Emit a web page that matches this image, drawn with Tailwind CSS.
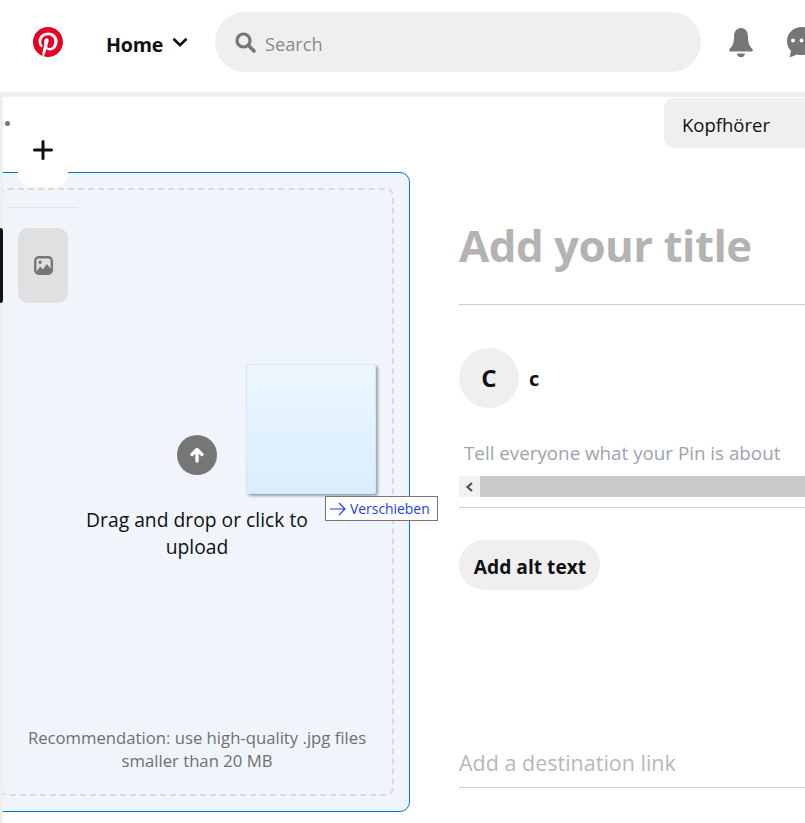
<!DOCTYPE html>
<html lang="en">
<head>
  <meta charset="UTF-8">
  <meta name="viewport" content="width=device-width, initial-scale=1.0">
  <title>Create Pin</title>
  <script src="https://cdn.jsdelivr.net/npm/@tailwindcss/browser@4"></script>
</head>
<body class="bg-white w-[805px] h-[823px] overflow-hidden font-['Open_Sans',sans-serif] text-[#111]">
  <!-- Top nav -->
  <header class="h-[92px] flex items-center bg-white pb-[8px]">
    <svg class="w-[30px] h-[30px] ml-[33px] shrink-0" viewBox="0 0 24 24" fill="#e60023"><path d="M0 12c0 5.123 3.211 9.497 7.730 11.218-.11-.937-.227-2.482.025-3.566.217-.932 1.401-5.938 1.401-5.938s-.357-.715-.357-1.774c0-1.660.962-2.900 2.161-2.900 1.020 0 1.512.765 1.512 1.682 0 1.025-.653 2.557-.99 3.978-.281 1.189.597 2.159 1.769 2.159 2.123 0 3.756-2.239 3.756-5.471 0-2.861-2.056-4.860-4.991-4.860-3.398 0-5.393 2.549-5.393 5.184 0 1.027.395 2.127.889 2.726a.36.36 0 0 1 .083.343c-.091.378-.293 1.189-.332 1.355-.053.218-.173.265-.4.159-1.492-.694-2.424-2.875-2.424-4.627 0-3.769 2.737-7.229 7.892-7.229 4.144 0 7.365 2.953 7.365 6.899 0 4.117-2.595 7.431-6.199 7.431-1.211 0-2.348-.63-2.738-1.373 0 0-.599 2.282-.744 2.840-.282 1.084-1.064 2.456-1.549 3.235C9.584 23.815 10.770 24 12 24c6.627 0 12-5.373 12-12S18.627 0 12 0 0 5.373 0 12"/></svg>
    <span class="ml-[43px] w-[57px] text-[19.6px] font-bold leading-none mt-[5px] tracking-[-0.2px]">Home</span>
    <svg class="w-[16px] h-[11px] ml-[9px] shrink-0" viewBox="0 0 16 11" fill="none" stroke="#111" stroke-width="2.600"><path d="M1.500 1.800 8 8.200l6.500-6.400"/></svg>
    <div class="ml-[27px] w-[486px] h-[60px] rounded-[30px] bg-[#efefef] flex items-center pl-[20px] shrink-0">
      <svg class="w-[21px] h-[21px] shrink-0" viewBox="0 0 21 21" fill="none" stroke="#767676"><circle cx="8.500" cy="8.500" r="6.500" stroke-width="3.200"/><path d="m13.500 13.500 5.500 5.500" stroke-width="3.600" stroke-linecap="round"/></svg>
      <span class="ml-[9px] mt-[6px] text-[18.2px] text-[#8a8a8a]">Search</span>
    </div>
    <svg class="w-[26px] h-[31px] ml-[27px] shrink-0" viewBox="0 0 26 31" fill="#767676"><path d="M13 1C8.500 1 6 4.500 6 10c0 6-1.500 9-4.300 12-.9 1-.6 2.500.7 2.500h21.200c1.300 0 1.600-1.500.7-2.500C21.500 19 20 16 20 10c0-5.500-2.500-9-7-9Z"/><path d="M9 26.500h8c0 2-1.800 3.800-4 3.800s-4-1.800-4-3.800Z"/></svg>
    <svg class="w-[30px] h-[31px] ml-[33px] shrink-0" viewBox="0 0 30 31"><path fill="#767676" d="M15 0C6.700 0 0 6 0 14c0 4 1.400 7.300 4 9.800L2.500 30.500l7.500-3c1.500.4 3.300.5 5 .5 8.300 0 15-6 15-14S23.300 0 15 0Z"/><circle cx="6" cy="13.500" r="1.900" fill="#fff"/><circle cx="14.500" cy="13.500" r="1.900" fill="#fff"/></svg>
  </header>
  <div class="h-[5px] bg-[#efefef]"></div>

  <main class="relative flex h-[726px] pl-[3px] overflow-hidden">
    <div class="absolute left-0 top-0 bottom-0 w-[3px] bg-[#efefef]"></div>

    <!-- Left column with upload card -->
    <section class="relative w-[407px] h-full shrink-0 overflow-hidden pt-[75px]">
      <div class="w-[426px] -ml-[19px] h-[640px] rounded-[10px] border border-[#0074e8] bg-[#f0f5fc] p-[15px]">
        <div class="h-full rounded-[8px] border-2 border-dashed border-[#dadada] flex flex-col items-center">
          <div class="w-[40px] h-[40px] mt-[245px] rounded-full bg-[#767676] flex items-center justify-center">
            <svg class="w-[16px] h-[16px]" viewBox="0 0 16 16" fill="none" stroke="#fff" stroke-width="3.400" stroke-linecap="round" stroke-linejoin="round"><path d="M8 14V3M3 7.500 8 2.500l5 5"/></svg>
          </div>
          <p class="mt-[31px] w-[240px] text-center text-[19.3px] leading-[27px] text-[#111]">Drag and drop or click to upload</p>
          <p class="mt-auto mb-[22px] w-[350px] text-center text-[16.7px] leading-[23px] text-[#6f6f6f]">Recommendation: use high-quality .jpg files smaller than 20 MB</p>
        </div>
      </div>
      <!-- Rail over the card -->
      <span class="absolute left-[2px] top-[24px] w-[5px] h-[5px] rounded-full bg-[#767676]"></span>
      <div class="absolute left-[15px] top-[30px] w-[50px] h-[60px] rounded-b-[14px] bg-white flex items-center justify-center pb-[14px]">
        <svg class="w-[20px] h-[20px]" viewBox="0 0 20 20" stroke="#111" stroke-width="3" stroke-linecap="round"><path d="M10 1.500v17M1.500 10h17"/></svg>
      </div>
      <div class="absolute left-[5px] top-[110px] w-[70px] h-px bg-[#e0e0e0]"></div>
      <div class="absolute left-[15px] top-[131px] w-[50px] h-[75px] rounded-[10px] bg-[#e0e0e0] flex items-center justify-center">
        <svg class="w-[19px] h-[19px]" viewBox="0 0 20 20"><rect width="20" height="20" rx="5" fill="#767676"/><rect x="2.500" y="2.500" width="15" height="15" rx="2.500" fill="#e0e0e0"/><path fill="#767676" d="M2 17l4.500-6 3 3 4-5.500L18 14v2a2 2 0 0 1-2 2H4a2 2 0 0 1-2-1Z"/><circle cx="6.500" cy="6.500" r="1.800" fill="#767676"/></svg>
      </div>
    </section>
    <div class="absolute left-0 top-[131px] w-[3px] h-[75px] rounded-r-[3px] bg-[#111]"></div>

    <!-- Right column with form fields -->
    <section class="ml-[49px] flex-1 min-w-0 relative">
      <h1 class="mt-[117px] h-[91px] pt-[1px] border-b border-[#cdcdcd] text-[43.8px] leading-[60px] font-bold text-[#b5b3b2] tracking-[-0.5px]">Add your title</h1>
      <div class="mt-[43px] flex items-center">
        <div class="w-[60px] h-[60px] rounded-full bg-[#efefef] flex items-center justify-center text-[24px] font-bold">C</div>
        <span class="ml-[10px] text-[20px] font-bold mt-[2px]">c</span>
      </div>
      <p class="mt-[31px] ml-[5px] text-[18.8px] leading-[28px] text-[#9ca3af] whitespace-nowrap">Tell everyone what your Pin is about</p>
      <div class="mt-[9px] h-[32px] border-b border-[#cdcdcd]">
        <div class="h-[21px] flex">
          <div class="w-[21px] bg-[#f1f1f1] flex items-center justify-center">
            <svg class="w-[9px] h-[10px]" viewBox="0 0 9 10" fill="none" stroke="#505050" stroke-width="2.200"><path d="M7 1 2.500 5 7 9"/></svg>
          </div>
          <div class="flex-1 bg-[#cacaca]"></div>
        </div>
      </div>
      <button class="mt-[32px] h-[50px] w-[141px] rounded-[25px] bg-[#efefef] text-[19.2px] font-bold leading-none pt-[4px] pl-[1px]">Add alt text</button>
      <div class="mt-[153px] h-[45px] border-b border-[#cdcdcd] text-[21.5px] leading-[40px] text-[#b8b8b8] whitespace-nowrap">Add a destination link</div>
      <div class="absolute left-[205px] top-[1px] w-[200px] h-[50px] rounded-l-[10px] bg-[#efefef] flex items-center pl-[18px] pt-[4px] text-[18.5px] text-[#111]">Kopfhörer</div>
    </section>

    <!-- Drag ghost and tooltip from the browser -->
    <div class="absolute left-[246px] top-[267px] w-[130px] h-[130px] rounded-[3px] border border-[#cfe8fb] bg-gradient-to-b from-[#edf6fe] to-[#d9eefd] shadow-[2px_2px_3px_rgba(0,0,0,0.35)]"></div>
    <div class="absolute left-[325px] top-[399px] w-[113px] h-[25px] border border-[#767676] bg-white flex items-center pl-[4px] text-[13.9px] text-[#1c3ed8]">
      <svg class="w-[16px] h-[14px] shrink-0" viewBox="0 0 16 14" fill="none" stroke="#1c3ed8" stroke-width="1.100"><path d="M0 7h15M9 1l6 6-6 6"/></svg>
      <span class="ml-[4px] leading-none">Verschieben</span>
    </div>
  </main>
</body>
</html>
